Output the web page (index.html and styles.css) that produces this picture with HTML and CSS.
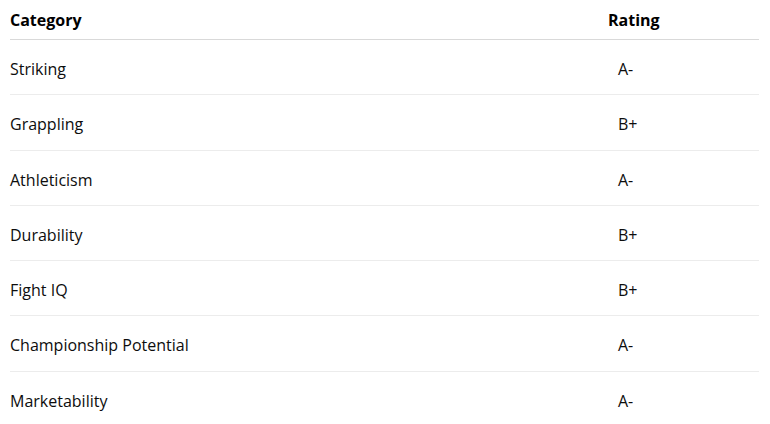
FILE: index.html
```html
<!DOCTYPE html>
<html lang="en">
<head>
    <meta charset="UTF-8">
    <meta name="viewport" content="width=device-width, initial-scale=1.0">
    <title>Fighter Ratings</title>
    <link rel="stylesheet" href="styles.css">
</head>
<body>
    <table class="ratings">
        <thead>
            <tr>
                <th class="cat">Category</th>
                <th class="rate">Rating</th>
            </tr>
        </thead>
        <tbody>
            <tr><td class="cat">Striking</td><td class="rate">A-</td></tr>
            <tr><td class="cat">Grappling</td><td class="rate">B+</td></tr>
            <tr><td class="cat">Athleticism</td><td class="rate">A-</td></tr>
            <tr><td class="cat">Durability</td><td class="rate">B+</td></tr>
            <tr><td class="cat">Fight IQ</td><td class="rate">B+</td></tr>
            <tr><td class="cat">Championship Potential</td><td class="rate">A-</td></tr>
            <tr><td class="cat">Marketability</td><td class="rate">A-</td></tr>
        </tbody>
    </table>
</body>
</html>
```

FILE: styles.css
```css
body { margin: 0; padding: 0; background: #fff; font-family: "Open Sans", "Noto Sans", sans-serif; color: #0d0d0d; }
.ratings { margin-left: 10px; width: 749px; border-collapse: collapse; font-size: 16px; line-height: 24px; }
.ratings th { text-align: left; font-weight: 700; color: #000; padding: 8px 0 7px; border-bottom: 1px solid #d9d9d9; }
.ratings td { padding: 17px 0 13.3px; border-bottom: 1px solid #ececec; }
.ratings tbody tr:last-child td { border-bottom: none; }
.ratings .cat { width: 598px; }
.ratings th.rate { padding-left: 0; }
.ratings td.rate { padding-left: 10px; }
```
